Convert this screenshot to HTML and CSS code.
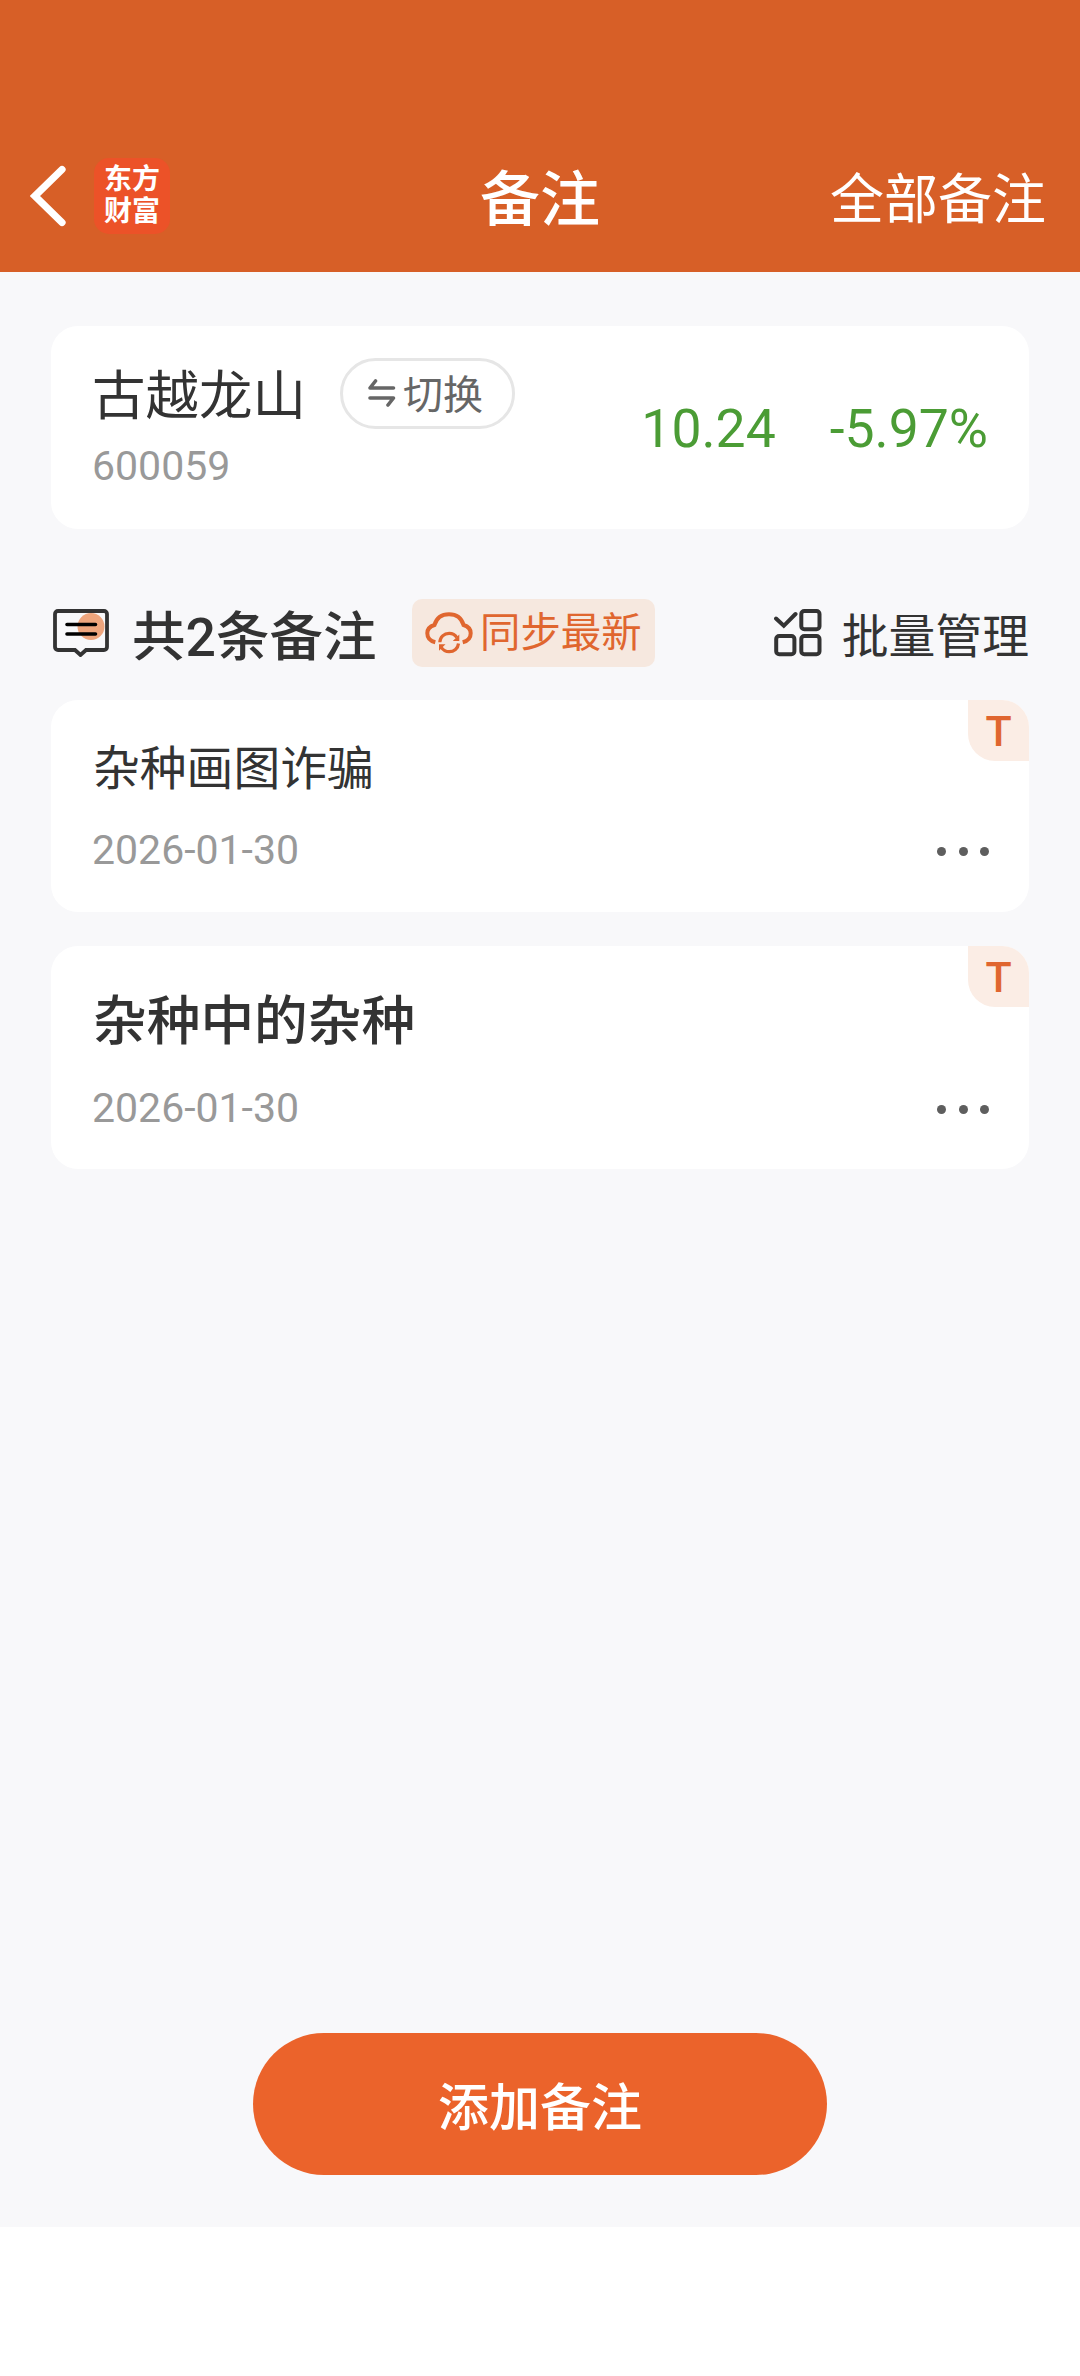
FILE: index.html
```html
<!DOCTYPE html>
<html lang="zh-CN">
<head>
<meta charset="utf-8">
<title>备注</title>
<link rel="stylesheet" href="styles.css">
</head>
<body>
<header class="header">
  <div class="header-left">
    <svg class="back" width="36" height="62" viewBox="0 0 36 62" fill="none" stroke="#fff" stroke-width="7.2" stroke-linecap="round"><path d="M32 4.500L5 31L32 57.500" stroke-linejoin="miter"/></svg>
    <div class="logo"><span>东方</span><span>财富</span></div>
  </div>
  <h1 class="title">备注</h1>
  <a class="all">全部备注</a>
</header>
<main class="page">
  <section class="card stock">
    <div class="stock-info">
      <div class="stock-row">
        <span class="stock-name">古越龙山</span>
        <button class="switch">
          <svg width="28" height="28" viewBox="0 0 28 28" fill="none" stroke="#666" stroke-width="3.600" stroke-linecap="round" stroke-linejoin="round"><path d="M25.500 9H2L7.500 2M2 19H25.500L20 26"/></svg>
          <span>切换</span>
        </button>
      </div>
      <div class="stock-code">600059</div>
    </div>
    <div class="quote"><span>10.24</span><span>-5.97%</span></div>
  </section>

  <div class="toolbar">
    <svg width="56" height="48" viewBox="0 0 56 48" fill="none"><circle cx="38" cy="17.500" r="13.500" fill="#eea57d"/><path d="M5 2H51a3 3 0 0 1 3 3V38a3 3 0 0 1-3 3H33L27.500 46L22 41H5a3 3 0 0 1-3-3V5a3 3 0 0 1 3-3Z" stroke="#333" stroke-width="3.800"/><path d="M14 15.500H42.500M14 25H42.500" stroke="#000" stroke-width="3.600" stroke-linecap="round"/></svg>
    <h2 class="count">共2条备注</h2>
    <button class="sync">
      <svg width="48" height="42" viewBox="0 0 48 42" fill="none" stroke="#e0662f" stroke-width="4"><path d="M10.300 30.300C5 29 2.300 25.500 2.300 21.300C2.300 17.300 5 14.300 9.500 13C11.500 6 17 2.300 24 2.300C31 2.300 36.500 6 38.500 13C43 14.300 45.700 17.300 45.700 21.300C45.700 25.500 43 29 37.700 30.300"/><path d="M14.800 30.300C15 25 19 21.300 24.200 21.300C27.600 21.300 30.300 23 31.800 25.500M33.500 31.500C33 36.500 29 39.700 24.200 39.700C20.700 39.700 18 38 16.400 35.500" stroke-width="3.200"/><path d="M34.300 22.500V29H27.800ZM14 38.700V32.200H20.500Z" fill="#e0662f" stroke="none"/></svg>
      <span>同步最新</span>
    </button>
    <div class="manage">
      <svg width="48" height="48" viewBox="0 0 48 48" fill="none" stroke="#333" stroke-width="4"><rect x="27.300" y="2" width="18.200" height="18.200" rx="3"/><rect x="2.200" y="27" width="18.200" height="18.200" rx="3"/><rect x="27.300" y="27" width="18.200" height="18.200" rx="3"/><path d="M2 9.500L9.800 16.800L21.500 5" stroke-linecap="round"/></svg>
      <span>批量管理</span>
    </div>
  </div>

  <article class="card note">
    <div class="note-text">杂种画图诈骗</div>
    <div class="note-foot"><span>2026-01-30</span><span class="dots"><i></i><i></i><i></i></span></div>
    <span class="badge">T</span>
  </article>
  <article class="card note note-large">
    <div class="note-text">杂种中的杂种</div>
    <div class="note-foot"><span>2026-01-30</span><span class="dots"><i></i><i></i><i></i></span></div>
    <span class="badge">T</span>
  </article>

  <button class="add">添加备注</button>
</main>
</body>
</html>
```
FILE: styles.css
```css
* { box-sizing: border-box; margin: 0; padding: 0; }
body {
  display: flex;
  flex-direction: column;
  width: 1080px;
  height: 2376px;
  background: #fff;
  color: #333;
  font-family: Roboto, "Noto Sans CJK SC", sans-serif;
}
svg { display: block; flex: none; }
button { border: 0; background: none; font: inherit; color: inherit; }

.header {
  display: grid;
  grid-template-columns: 1fr auto 1fr;
  align-items: center;
  height: 272px;
  padding: 120px 34px 0 30px;
  background: #d75f27;
  color: #fff;
}
.header-left { display: flex; align-items: center; gap: 28px; }
.logo {
  display: flex;
  flex-direction: column;
  justify-content: center;
  align-items: center;
  width: 76px;
  height: 76px;
  border-radius: 15px;
  background: #ec5228;
  font-size: 28px;
  font-weight: 700;
  line-height: 32px;
}
.title { padding: 10px 0 0 4px; font-size: 60px; font-weight: 500; line-height: 80px; }
.all { justify-self: end; padding-top: 10px; font-size: 54px; line-height: 72px; }

.page {
  display: flex;
  flex-direction: column;
  height: 1955px;
  padding: 54px 51px 52px;
  background: #f8f8fa;
}
.card { border-radius: 27px; background: #fff; }
.stock {
  display: flex;
  justify-content: space-between;
  align-items: flex-start;
  height: 203px;
  padding: 32px 41px 0;
}
.stock-row { display: flex; align-items: center; gap: 34px; height: 71px; }
.stock-name { padding-top: 7px; font-size: 53.500px; line-height: 70px; }
.switch {
  display: flex;
  align-items: center;
  gap: 7px;
  width: 175px;
  height: 71px;
  padding-left: 25px;
  border: 3px solid #e6e6e6;
  border-radius: 36px;
  color: #666;
  font-size: 40px;
  line-height: 60px;
}
.switch span { padding-top: 4px; }
.switch svg { margin-top: -2px; }
.stock-code { margin-top: 13px; color: #999; font-size: 41px; line-height: 48px; }
.quote { display: flex; gap: 54px; padding-top: 39px; color: #4b9c35; font-size: 53.500px; line-height: 64px; }

.toolbar { display: flex; align-items: center; height: 68px; margin: 70px 0 33px; padding-left: 2px; }
.count { width: 245px; margin-left: 23px; padding-top: 9px; font-size: 53.500px; font-weight: 500; line-height: 70px; white-space: nowrap; }
.sync {
  display: flex;
  align-items: center;
  gap: 7px;
  width: 243px;
  height: 68px;
  margin-left: 35px;
  padding-left: 13px;
  border-radius: 10px;
  background: #f6e8df;
  color: #e0662f;
  font-size: 40.400px;
  line-height: 60px;
}
.sync span { padding-top: 2px; }
.manage { display: flex; align-items: center; gap: 20px; margin-left: auto; font-size: 46.800px; line-height: 60px; }
.manage span { padding-top: 7px; }

.note { position: relative; display: flex; flex-direction: column; height: 212px; padding: 38px 34px 0 41px; }
.note + .note { margin-top: 34px; }
.note-text { padding-left: 1px; font-size: 46.800px; line-height: 62px; }
.note-foot {
  display: flex;
  justify-content: space-between;
  align-items: center;
  margin-top: 26px;
  color: #999;
  font-size: 41px;
  line-height: 48px;
}
.note-large { height: 223px; }
.note-large .note-text { padding-top: 1px; font-size: 53.700px; font-weight: 500; line-height: 73px; }
.dots { display: flex; gap: 12.300px; padding-top: 2px; margin-right: 6px; }
.dots i { width: 9px; height: 9px; border-radius: 50%; background: #5e5e5e; }
.badge {
  position: absolute;
  top: 0;
  right: 0;
  width: 61px;
  height: 61px;
  border-radius: 0 27px 0 27px;
  background: #fbede5;
  color: #e0662f;
  font-size: 43px;
  font-weight: 500;
  line-height: 63px;
  text-align: center;
}
.add {
  width: 574px;
  height: 142px;
  margin: auto auto 0;
  padding-bottom: 1px;
  border-radius: 71px;
  background: #eb632b;
  color: #fff;
  font-size: 51px;
  font-weight: 500;
}
```
